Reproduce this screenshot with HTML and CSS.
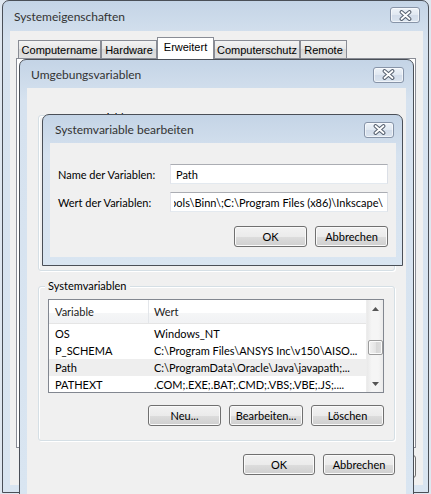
FILE: index.html
```html
<!DOCTYPE html>
<html lang="de">
<head>
<meta charset="utf-8">
<title>Systemeigenschaften</title>
<link rel="stylesheet" href="styles.css">
</head>
<body>
<div class="win win-sys">
  <div class="titlebar">
    <span class="title">Systemeigenschaften</span>
    <span class="close-btn"><svg width="13" height="11" viewBox="0 0 13 11"><path d="M2.5 2L10.5 9M10.5 2L2.5 9" stroke="#56606f" stroke-width="3.8" stroke-linecap="round" fill="none"/><path d="M2.5 2L10.5 9M10.5 2L2.5 9" stroke="#fff" stroke-width="1.8" stroke-linecap="round" fill="none"/></svg></span>
  </div>
  <div class="client sys-client">
    <div class="tabs">
      <div class="tab t1">Computername</div>
      <div class="tab t2">Hardware</div>
      <div class="tab t3 active">Erweitert</div>
      <div class="tab t4">Computerschutz</div>
      <div class="tab t5">Remote</div>
    </div>
    <div class="tabpanel"></div>
    <div class="sys-buttons">
      <button class="btn" aria-label="Übernehmen"></button>
    </div>
  </div>
</div>

<div class="win win-env">
  <div class="titlebar">
    <span class="title">Umgebungsvariablen</span>
    <span class="close-btn"><svg width="13" height="11" viewBox="0 0 13 11"><path d="M2.5 2L10.5 9M10.5 2L2.5 9" stroke="#56606f" stroke-width="3.8" stroke-linecap="round" fill="none"/><path d="M2.5 2L10.5 9M10.5 2L2.5 9" stroke="#fff" stroke-width="1.8" stroke-linecap="round" fill="none"/></svg></span>
  </div>
  <div class="client env-client">
    <div class="group group-user">
      <span class="group-label">Benutzervariablen für F</span>
    </div>
    <div class="group group-sys">
      <span class="group-label">Systemvariablen</span>
      <div class="listview">
        <div class="lv-main">
          <div class="lv-header">
            <div class="c1">Variable</div>
            <div class="c2">Wert</div>
          </div>
          <div class="lv-row"><div class="c1">OS</div><div class="c2">Windows_NT</div></div>
          <div class="lv-row"><div class="c1">P_SCHEMA</div><div class="c2">C:\Program Files\ANSYS Inc\v150\AISO...</div></div>
          <div class="lv-row selected"><div class="c1">Path</div><div class="c2">C:\ProgramData\Oracle\Java\javapath;...</div></div>
          <div class="lv-row"><div class="c1">PATHEXT</div><div class="c2">.COM;.EXE;.BAT;.CMD;.VBS;.VBE;.JS;....</div></div>
        </div>
        <div class="scrollbar">
          <div class="sb-arrow"><svg width="7" height="4" viewBox="0 0 7 4"><path d="M0 4L3.5 0L7 4Z" fill="#555"/></svg></div>
          <div class="sb-track"><div class="sb-thumb"></div></div>
          <div class="sb-arrow"><svg width="7" height="4" viewBox="0 0 7 4"><path d="M0 0L3.5 4L7 0Z" fill="#555"/></svg></div>
        </div>
      </div>
      <div class="btn-row group-buttons">
        <button class="btn">Neu...</button>
        <button class="btn">Bearbeiten...</button>
        <button class="btn">Löschen</button>
      </div>
    </div>
    <div class="btn-row env-buttons">
      <button class="btn">OK</button>
      <button class="btn">Abbrechen</button>
    </div>
  </div>
</div>

<div class="win win-edit">
  <div class="titlebar">
    <span class="title">Systemvariable bearbeiten</span>
    <span class="close-btn"><svg width="13" height="11" viewBox="0 0 13 11"><path d="M2.5 2L10.5 9M10.5 2L2.5 9" stroke="#56606f" stroke-width="3.8" stroke-linecap="round" fill="none"/><path d="M2.5 2L10.5 9M10.5 2L2.5 9" stroke="#fff" stroke-width="1.8" stroke-linecap="round" fill="none"/></svg></span>
  </div>
  <div class="client edit-client">
    <div class="field-row">
      <span class="field-label">Name der Variablen:</span>
      <div class="textbox"><span>Path</span></div>
    </div>
    <div class="field-row">
      <span class="field-label">Wert der Variablen:</span>
      <div class="textbox scrolled"><div class="tb-clip"><span>ools\Binn\;C:\Program Files (x86)\Inkscape\</span></div></div>
    </div>
    <div class="btn-row edit-buttons">
      <button class="btn">OK</button>
      <button class="btn">Abbrechen</button>
    </div>
  </div>
</div>
</body>
</html>
```

FILE: styles.css
```css
* { box-sizing: border-box; }
html, body { margin: 0; padding: 0; }
body {
  width: 431px;
  height: 494px;
  overflow: hidden;
  position: relative;
  background: #dfe7f0;
  font-family: Lato, "Noto Sans", sans-serif;
  font-size: 11px;
  color: #000;
}

.win {
  position: absolute;
  display: flex;
  flex-direction: column;
  border: 1px solid #4a4f57;
  border-radius: 7px 7px 0 0;
  background: linear-gradient(#c4d4e6, #d6e2ef 40px, #d9e5f1);
}
.titlebar {
  display: flex;
  align-items: center;
  justify-content: space-between;
  flex: none;
}
.title {
  color: #333;
  font-size: 12px;
}
.close-btn {
  width: 30px;
  height: 16px;
  border: 1px solid #8794a8;
  border-radius: 3px;
  background: linear-gradient(#eef3f9, #e0e8f1 50%, #d2dcea 50%, #dae4ef);
  box-shadow: inset 0 0 0 1px rgba(255,255,255,0.6);
  display: flex;
  align-items: center;
  justify-content: center;
}
.client {
  background: #f0f0f0;
  flex: 1;
  display: flex;
  flex-direction: column;
}

/* outer window */
.win-sys {
  left: 2px;
  top: 0;
  width: 427px;
  height: 493px;
  padding: 0 5px 7px 7px;
}
.win-sys .titlebar {
  height: 30px;
  padding: 0 3px 0 4px;
}
.win-sys .close-btn { margin-top: -2px; }
.sys-client { padding-top: 6px; }
.tabs {
  display: flex;
  align-items: flex-end;
  height: 21px;
  margin-left: 8px;
  font-family: "Liberation Sans", Arial, sans-serif;
  font-size: 11px;
}
.tab {
  height: 18px;
  border: 1px solid #898c95;
  border-bottom: none;
  background: linear-gradient(#f3f3f3, #e6e6e6 50%, #d9d9d9 50%, #e1e1e1);
  display: flex;
  align-items: center;
  justify-content: center;
  padding-top: 1px;
}
.tab.active {
  height: 22px;
  margin-bottom: -1px;
  background: #fff;
  position: relative;
  z-index: 1;
  align-items: flex-start;
  padding-top: 3px;
}
.t1 { width: 83px; }
.t2 { width: 56px; }
.t3 { width: 57px; }
.t4 { width: 86px; }
.t5 { width: 47px; }
.tabpanel {
  height: 390px;
  margin: 0 7px 0 6px;
  border: 1px solid #898c95;
  background: #fff;
}
.sys-buttons {
  display: flex;
  justify-content: flex-end;
  margin: 7px 7px 0 0;
}
.sys-buttons .btn { height: 23px; width: 75px; }

/* buttons */
.btn {
  font-family: Lato, "Noto Sans", sans-serif;
  font-size: 11px;
  color: #000;
  height: 21px;
  width: 73px;
  padding: 0;
  border: 1px solid #707070;
  border-radius: 3px;
  background: linear-gradient(#f2f2f2, #ebebeb 50%, #dddddd 50%, #cfcfcf);
  box-shadow: inset 0 0 0 1px #fafafa;
}
.btn-row {
  display: flex;
  justify-content: flex-end;
}

/* env window */
.win-env {
  left: 19px;
  top: 59px;
  width: 395px;
  height: 445px;
  padding: 0 7px 7px 7px;
}
.win-env .titlebar {
  height: 28px;
  padding: 0 2px 0 4px;
}
.win-env .close-btn { width: 31px; margin-top: 1px; }
.env-client {
  padding: 0 11px;
}
.group {
  position: relative;
  border: 1px solid #d5dfe5;
  border-radius: 3px;
  box-shadow: 1px 1px 0 #fff inset, 1px 1px 0 #fff;
}
.group-label {
  position: absolute;
  top: -8px;
  left: 6px;
  padding: 0 3px;
  background: #f0f0f0;
  line-height: 14px;
}
.group-user {
  margin-top: 27px;
  height: 156px;
}
.group-user .group-label { top: -5px; }
.group-sys {
  margin-top: 15px;
  padding: 12px 10px 14px 9px;
}
.listview {
  display: flex;
  height: 94px;
  border: 1px solid #828790;
  background: #fff;
}
.lv-main {
  flex: 1;
  display: flex;
  flex-direction: column;
  min-width: 0;
}
.lv-header {
  display: flex;
  height: 24px;
  flex: none;
  border-bottom: 1px solid #e5e5e5;
  background: linear-gradient(#ffffff, #ffffff 55%, #f5f6f7 55%, #f1f2f4);
  color: #222;
  align-items: center;
  margin-bottom: 1px;
}
.lv-header .c1 {
  border-right: 1px solid #e3e6ea;
  height: 100%;
  display: flex;
  align-items: center;
}
.c1 {
  width: 100px;
  flex: none;
  padding-left: 6px;
}
.c2 {
  flex: 1;
  padding-left: 5px;
  white-space: nowrap;
  overflow: hidden;
}
.lv-row {
  display: flex;
  height: 17px;
  align-items: center;
  flex: none;
  white-space: nowrap;
}
.lv-row.selected { background: #eeeeee; }
.scrollbar {
  width: 17px;
  flex: none;
  display: flex;
  flex-direction: column;
  background: linear-gradient(90deg, #e9e9e9, #f5f5f5 30%, #f5f5f5 70%, #ebebeb);
  border-left: 1px solid #ededed;
}
.sb-arrow {
  height: 17px;
  display: flex;
  align-items: center;
  justify-content: center;
  flex: none;
}
.sb-track {
  flex: 1;
  padding: 23px 0 0 1px;
}
.sb-thumb {
  width: 15px;
  height: 15px;
  border: 1px solid #9c9c9c;
  border-radius: 2px;
  background: linear-gradient(90deg, #f2f2f2, #e4e4e4 50%, #d6d6d6 50%, #dedede);
  box-shadow: inset 0 0 0 1px #fbfbfb;
}
.group-buttons {
  margin-top: 12px;
  gap: 8px;
}
.group-buttons .btn:nth-child(2) { width: 74px; }
.env-buttons {
  margin-top: 13px;
  gap: 8px;
}
.env-buttons .btn { width: 72px; }

/* edit dialog */
.win-edit {
  left: 42px;
  top: 114px;
  width: 361px;
  padding: 0 6px 8px 7px;
}
.win-edit .titlebar {
  height: 28px;
  padding: 0 2px 0 5px;
}
.win-edit .close-btn { height: 16px; margin-top: 1px; }
.edit-client {
  padding: 21px 7px 11px 8px;
  height: 114px;
  flex: none;
}
.field-row {
  display: flex;
  align-items: center;
  height: 20px;
}
.field-row + .field-row { margin-top: 8px; }
.field-label {
  width: 112px;
  flex: none;
}
.textbox {
  width: 218px;
  height: 20px;
  background: #fff;
  border: 1px solid #abadb3;
  border-color: #abadb3 #dbdfe6 #e3e9ef #e2e3ea;
  display: flex;
  align-items: center;
  padding: 0 5px;
  white-space: nowrap;
}
.textbox.scrolled {
  padding: 0 4px 0 3px;
}
.tb-clip {
  flex: 1;
  min-width: 0;
  overflow: hidden;
  display: flex;
  justify-content: flex-end;
}
.tb-clip span { flex: none; }
.edit-buttons {
  margin-top: 14px;
  gap: 8px;
  padding-right: 1px;
}
```
